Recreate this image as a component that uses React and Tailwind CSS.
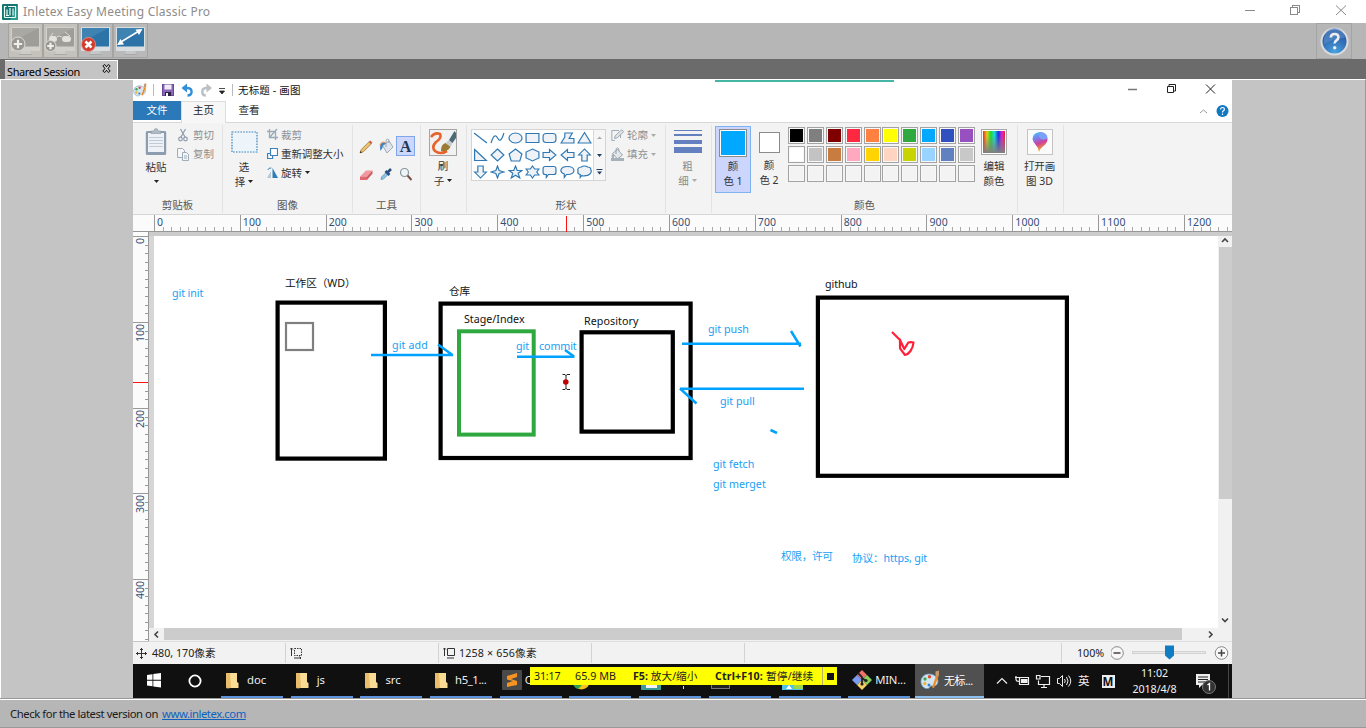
import React from "react";

const B = "#2f78b4";

function Label({ children, className = "" }) {
  return <span className={"block whitespace-nowrap " + className}>{children}</span>;
}

/* ---------- outer window ---------- */

function TitleBar() {
  return (
    <div className="flex h-[23px] items-center bg-white">
      <svg className="ml-[2px] h-4 w-4" viewBox="0 0 16 16">
        <rect width="16" height="16" rx="1" fill="#14756f" />
        <path d="M16 0v16H8z" fill="#2a9c8e" />
        <path d="M2.500 13.500V2.500H4.500M13.500 13.500V2.500H6M2.500 13.500h11M5 5.500v6M8 4v7.500M11 4.500v7M4 11.500h3" stroke="#e8fffb" strokeWidth="1.200" fill="none" />
      </svg>
      <Label className="ml-[5px] grow text-[12px] leading-none tracking-[0.230px] text-[#8c8c8c]">Inletex Easy Meeting Classic Pro</Label>
      <svg className="h-[23px] w-[130px]" viewBox="1236 0 130 23" fill="none" stroke="#8a8a8a" shapeRendering="crispEdges">
        <path d="M1245 10.500h10M1290.500 7.500h7v7h-7zM1292.500 7.500v-2h7v7h-2" />
        <path d="M1336 5.500l10 9.500M1346 5.500l-10 9.500" shapeRendering="auto" />
      </svg>
    </div>
  );
}

function Monitor({ gray, children }) {
  return (
    <div className={"flex h-[35px] w-[35px] items-center justify-center border border-[#a5a39f] " + (gray ? "bg-[#c5c2bb]" : "bg-[#b9b9b9]")}>
      <svg className="h-[33px] w-[33px]" viewBox="0 0 33 33">
        <path d="M11 30l1-4h9l1 4z" fill={gray ? "#cfccc6" : "#c5c8ca"} />
        <rect x="2" y="3" width="29" height="24" rx="1" fill={gray ? "#d2d0ca" : "#d9dee0"} />
        <rect x="3" y="4" width="27" height="18.500" fill={gray ? "#9f9d97" : "#2c74a8"} />
        <path d="M3 4h27L3 18z" fill={gray ? "#aaa8a2" : "#3e83b2"} />
        <rect x="10" y="30" width="13" height="1" fill="#a9a9a7" />
        {children}
      </svg>
    </div>
  );
}

function Plus({ x, y, r }) {
  return (
    <g>
      <circle cx={x} cy={y} r={r} fill="#999791" stroke="#dddbd6" strokeWidth="1" />
      <path d={`M${x - r * 0.6} ${y}h${r * 1.2}M${x} ${y - r * 0.6}v${r * 1.2}`} stroke="#f0efec" strokeWidth="2.2" />
    </g>
  );
}

function Toolbar() {
  return (
    <div className="flex h-[36px] justify-between bg-[#b6b6b6] pl-[8px] pr-[14px]">
      <div className="flex">
        <Monitor gray><Plus x={9} y={20} r={7} /></Monitor>
        <Monitor gray>
          <path d="M9 9L6 13M21 8l5 4" stroke="#dedcd7" fill="none" />
          <rect x="5" y="12" width="8" height="6" rx="3" fill="#e4e2dd" />
          <rect x="18" y="12" width="9" height="6" rx="3" fill="#e4e2dd" />
          <path d="M13 13q2-2 5 0" stroke="#dedcd7" fill="none" />
          <Plus x={6.5} y={22} r={5.5} />
        </Monitor>
        <Monitor>
          <circle cx="9.500" cy="20.500" r="7" fill="#d23a2c" stroke="#e79a92" strokeWidth=".8" />
          <path d="M6.500 17.500l6 6M12.500 17.500l-6 6" stroke="#fff" strokeWidth="2.600" />
        </Monitor>
        <Monitor>
          <path d="M6 18.500L25 7" stroke="#fff" strokeWidth="1.500" />
          <path d="M3 21l3.500-6 3.500 5.500zM28.500 5l-7 0.500 3.500 5.500z" fill="#fff" />
        </Monitor>
      </div>
      <div className="flex h-[36px] w-[36px] items-center justify-center border border-[#a4a4a4]">
        <svg className="h-[29px] w-[29px]" viewBox="0 0 29 29">
          <defs>
            <radialGradient id="hb" cx="50%" cy="95%" r="90%">
              <stop offset="0" stopColor="#4aa3e0" />
              <stop offset="1" stopColor="#244f9c" />
            </radialGradient>
          </defs>
          <circle cx="14.500" cy="14.500" r="14" fill="#d9dcdf" />
          <circle cx="14.500" cy="14.500" r="12" fill="url(#hb)" />
          <path d="M4 12a10.500 10.500 0 0 1 21-1q-9-1-21 6z" fill="#5d8fca" opacity=".6" />
          <path d="M10.800 10.500q0-3.500 3.800-3.500t3.800 3.200q0 1.800-2 3.100t-1.700 3.200" stroke="#eee" strokeWidth="2.600" fill="none" />
          <circle cx="14.700" cy="20.800" r="1.700" fill="#eee" />
        </svg>
      </div>
    </div>
  );
}

function TabStrip() {
  return (
    <div className="flex h-[20px] items-end bg-[#6b6b6b] pl-[5px]">
      <div className="flex h-[19px] w-[113px] items-center justify-between border-r border-t border-white bg-[#c4c4c4] pl-[2px] pr-[6px]">
        <Label className="pt-[2px] text-[11px] leading-none tracking-[-0.380px] text-black">Shared Session</Label>
        <svg className="mb-[3px] h-[9px] w-[9px]" viewBox="0 0 9 9" fill="none">
          <path d="M1.500 1l6 7M7.500 1l-6 7" stroke="#111" strokeWidth="3" />
          <path d="M2 1.500l5 6M7 1.500l-5 6" stroke="#ddd" strokeWidth="1.200" />
        </svg>
      </div>
    </div>
  );
}

/* ---------- paint window chrome ---------- */

function Palette({ className }) {
  return (
    <svg className={className} viewBox="0 0 20 20">
      <path d="M9 4C3 4 .5 9 1 12.500S4 19 8 18.500c2-.3 1.500-2 3-2.500s5 1 6.500-2.500C19.500 9 15 4 9 4z" fill="#d3e6f3" stroke="#6f9fc2" strokeWidth=".8" />
      <circle cx="5" cy="9" r="1.700" fill="#3aa655" />
      <circle cx="9.500" cy="6.800" r="1.700" fill="#e2492f" />
      <circle cx="4.800" cy="13.500" r="1.700" fill="#f2b632" />
      <circle cx="9" cy="15" r="1.500" fill="#3b7fd0" />
      <path d="M16 6l2.500.5L14 18l-2-.5z" fill="#f08a24" />
      <path d="M15.500 1.500l3.500-1-.2 6-3.300-.5z" fill="#c99a6a" />
    </svg>
  );
}

function QuickBar() {
  return (
    <div className="flex h-[22px] items-center bg-white">
      <Palette className="h-[14px] w-[14px]" />
      <svg className="ml-[3px] h-[22px] w-[86px]" viewBox="150 79 86 22" fill="none">
        <path d="M153.500 84v12M232.500 84v12" stroke="#bbb" />
        <rect x="162.500" y="84.500" width="11" height="11" fill="#8a67b5" stroke="#6b4799" />
        <rect x="164.500" y="84.500" width="7" height="5" fill="#f0ecf6" />
        <rect x="165" y="92" width="6" height="4" fill="#2e2344" />
        <rect x="166" y="93" width="2" height="3" fill="#fff" />
        <path d="M183 88h4.500q4.500 0 4 4.500-.5 3-4 3" stroke="#2f8fd8" strokeWidth="2.400" />
        <path d="M187 83.500l-5.500 4.500 5.500 4.500z" fill="#2f8fd8" />
        <path d="M210 88h-4q-4 0-3.700 4.500.4 3 3.500 3" stroke="#b9bfc4" strokeWidth="2.400" />
        <path d="M206.500 83.500l5.500 4.500-5.500 4.500z" fill="#b9bfc4" />
        <path d="M219 88.500h6M219.500 91h5l-2.500 3z" stroke="#222" strokeWidth=".8" fill="#222" />
      </svg>
      <Label className="ml-[2px] grow text-[10.500px] leading-none tracking-[0.150px] text-[#111]">无标题 - 画图</Label>
      <svg className="h-[22px] w-[532px]" viewBox="700 79 532 22" fill="none" stroke="#222">
        <path d="M715 81h179" stroke="#45b5a4" strokeWidth="2" />
        <path d="M1128 89.500h9" stroke="#777" strokeWidth="1.500" />
        <path d="M1167.500 86.500h6v6h-6zM1169 86v-1.500h6.500v6.500h-1.500" />
        <path d="M1206 84.500l9 9M1215 84.500l-9 9" />
      </svg>
    </div>
  );
}

function RibbonTabs() {
  return (
    <div className="flex h-[22px] items-start border-b border-[#d8d8d8] bg-white text-[10.500px] leading-none">
      <div className="flex h-[19px] w-[48px] items-center justify-center bg-[#2b79b9] text-white">文件</div>
      <div className="flex h-[22px] w-[45px] items-center justify-center border-x border-t border-[#dcdcdc] bg-[#f7f7f7] pb-[4px] text-[#222]">主页</div>
      <div className="flex h-[19px] w-[46px] items-center justify-center text-[#333]">查看</div>
      <div className="grow" />
      <svg className="h-[20px] w-[40px]" viewBox="1192 101 40 20" fill="none">
        <path d="M1200 113l3.500-3 3.500 3" stroke="#999" />
        <circle cx="1222.500" cy="111" r="6" fill="#1078c0" />
        <path d="M1220.600 109.500q0-2 1.900-2t1.900 1.700q0 1-1 1.600t-.9 1.700M1222.500 113.500v1.500" stroke="#fff" strokeWidth="1.200" />
      </svg>
    </div>
  );
}

function Group({ className = "", label, children }) {
  return (
    <div className={"flex h-[88px] shrink-0 flex-col justify-between border-r border-[#e2e3e4] pb-px " + className}>
      <div className="flex">{children}</div>
      <div className="flex h-[14px] justify-center text-[10.500px] leading-[14px] text-[#555]">{label}</div>
    </div>
  );
}

function Caret({ className = "", color = "#222" }) {
  return (
    <svg className={"h-[3px] w-[5px] " + className} viewBox="0 0 5 3">
      <path d="M0 0h5L2.500 3z" fill={color} />
    </svg>
  );
}

function Clipboard() {
  return (
    <Group className="w-[90px]" label="剪贴板">
      <div className="flex w-[46px] flex-col items-center pt-[3px] text-[10.500px] leading-none text-[#333]">
        <svg className="h-[28px] w-[22px]" viewBox="0 0 22 28">
          <rect x=".8" y="3" width="20.400" height="24" rx="1.500" fill="#8c9db0" />
          <rect x="3" y="5" width="16" height="19" fill="#eef2f6" />
          <path d="M4 9.500h14M4 12.500h14M4 15.500h14M4 18.500h14" stroke="#c3ccd6" />
          <path d="M6 5.500V3h3q0-2.500 2-2.500T13 3h3v2.500z" fill="#b2bcc6" stroke="#8593a1" strokeWidth=".6" />
        </svg>
        <Label className="mt-[6px]">粘贴</Label>
        <Caret className="mt-[7px]" />
      </div>
      <div className="-ml-[2px] flex flex-col gap-[5px] pt-[3px] text-[10.500px] leading-[14px] text-[#8e8e8e]">
        <div className="flex gap-[4px]">
          <svg className="h-[14px] w-[12px]" viewBox="0 0 12 14" fill="none" stroke="#8d9cab" strokeWidth="1.200">
            <path d="M3.500 1l4.500 8M8.500 1L4 9" />
            <circle cx="3.500" cy="11" r="1.800" />
            <circle cx="8.500" cy="11" r="1.800" />
          </svg>
          <Label>剪切</Label>
        </div>
        <div className="flex gap-[4px]">
          <svg className="h-[14px] w-[12px]" viewBox="0 0 12 14" fill="#f4f6f8" stroke="#9fadbb">
            <path d="M.5 1.500h5l2 2v7h-7z" />
            <path d="M5.500 5.500h4l2 2v6h-6zM7 9h3M7 11h3" />
          </svg>
          <Label>复制</Label>
        </div>
      </div>
    </Group>
  );
}

function ImageGroup() {
  return (
    <Group className="w-[130px]" label="图像">
      <div className="flex w-[42px] flex-col items-center pt-[6px] text-[10.500px] leading-none text-[#333]">
        <svg className="h-[22px] w-[27px]" viewBox="0 0 27 22">
          <rect x="1" y="1" width="25" height="20" fill="#eef5fa" stroke="#3584bf" strokeWidth="1.200" strokeDasharray="1.600 1.200" />
        </svg>
        <Label className="mt-[9px]">选</Label>
        <div className="mt-[4px] flex items-center gap-[3px]"><span>择</span><Caret /></div>
      </div>
      <div className="flex flex-col gap-[5px] pl-[2px] pt-[3px] text-[10.500px] leading-[14px] text-[#333]">
        <div className="flex gap-[3px] text-[#909090]">
          <svg className="h-[13px] w-[11px]" viewBox="0 0 11 13" fill="none" stroke="#9aa9b6" strokeWidth="1.300">
            <path d="M2.500 1v8.500H11M0 3.500h8.500V12M10 1L3 9" />
          </svg>
          <Label>裁剪</Label>
        </div>
        <div className="flex gap-[3px]">
          <svg className="h-[13px] w-[11px]" viewBox="0 0 11 13" fill="#fff" stroke="#3a82b8" strokeWidth="1.200">
            <path d="M.6 6.500h5v5h-5z" />
            <path d="M3.500 1.500h7v7h-7z" />
          </svg>
          <Label className="tracking-[-0.100px]">重新调整大小</Label>
        </div>
        <div className="flex gap-[3px]">
          <svg className="h-[13px] w-[11px]" viewBox="0 0 11 13">
            <path d="M0 12l4-7v7z" fill="#b9c6d0" />
            <path d="M5.500 2v10H11z" fill="#2f7db5" />
            <path d="M.8 4q1-2.500 3.500-2" stroke="#2f7db5" fill="none" />
          </svg>
          <Label>旋转</Label>
          <Caret className="mt-[5px]" />
        </div>
      </div>
    </Group>
  );
}

function ToolsGroup() {
  return (
    <Group className="w-[68px]" label="工具">
      <div className="grid grid-cols-[20px_20px_20px] gap-y-[8px] pl-[3px] pt-[11px]">
        <svg className="h-[20px] w-[20px]" viewBox="0 0 20 20">
          <path d="M4 17l1.200-3.500L13 5.800l2.200 2.200L7.500 15.700z" fill="#e9c06f" stroke="#9b7135" strokeWidth=".7" />
          <path d="M13 5.800l1.200-1.200 2.200 2.200-1.200 1.200z" fill="#c5573d" />
          <path d="M4 17l.6-2 1.400 1.400z" fill="#222" />
        </svg>
        <svg className="h-[20px] w-[20px]" viewBox="0 0 20 20">
          <path d="M6.500 9.500l6.500-4.500 4 6-6 6z" fill="#dfe7ee" stroke="#8b97a2" strokeWidth=".8" />
          <path d="M10 11V5.500Q10 3 11.500 3t1.500 2v2" fill="none" stroke="#8b97a2" strokeWidth=".8" />
          <path d="M9 7Q4 6 4 12l.5 3Q7 12 7 9.500l3-2z" fill="#3d85c6" />
          <path d="M9 6.500Q5 5 4 9.500" stroke="#d8863f" fill="none" />
        </svg>
        <div className="flex h-[20px] w-[19px] items-center justify-center border border-[#7ea6e8] bg-[#ccd7fb] pt-px font-['Liberation_Serif',serif] text-[16px] font-bold leading-none text-[#1f3757]">A</div>
        <svg className="h-[20px] w-[20px]" viewBox="0 0 20 20">
          <path d="M4 12.500l6-6h6.500l-5.500 6z" fill="#f09aa0" />
          <path d="M4 12.500h7v3.500H4z" fill="#e0696f" />
          <path d="M11 12.500l5.500-6v3L11 16z" fill="#cd5960" />
        </svg>
        <svg className="h-[20px] w-[20px]" viewBox="0 0 20 20">
          <path d="M5 15.500l.5-2.500 5-5 2 2-5 5z" fill="#8cc3e6" stroke="#5a8bb0" strokeWidth=".7" />
          <path d="M9.500 7l4 4M11.500 8.500l3.500-3.500" stroke="#284f80" strokeWidth="2.600" />
        </svg>
        <svg className="h-[20px] w-[20px]" viewBox="0 0 20 20">
          <circle cx="8.500" cy="8.500" r="4" fill="#eef5f8" stroke="#87939b" strokeWidth="1.200" />
          <path d="M11.500 11.500l4 4.500" stroke="#7a5044" strokeWidth="2" />
        </svg>
      </div>
    </Group>
  );
}

function BrushGroup() {
  return (
    <Group className="w-[46px]">
      <div className="flex w-[44px] flex-col items-center pt-[4px] text-[10.500px] leading-none text-[#333]">
        <svg className="h-[27px] w-[28px]" viewBox="0 0 28 27">
          <rect x=".5" y=".5" width="27" height="26" fill="#f1f1f1" stroke="#a5a5a5" />
          <path d="M2 8Q6 3 11 5q2 4-4 8-5 5-1 9 5 4 12 0" fill="none" stroke="#e8622c" strokeWidth="2.600" />
          <path d="M12 22q0-7 4.500-8l5 3q-1 6-9.500 5z" fill="#9c7b35" />
          <path d="M16.500 14l3.500-3 3.500 3-2 4z" fill="#c9cdd0" />
          <path d="M20 11l5.500-9L27 4v5l-3.500 5z" fill="#4d6878" />
        </svg>
        <Label className="mt-[5px]">刷</Label>
        <div className="mt-[4px] flex items-center gap-[3px]"><span>子</span><Caret /></div>
      </div>
    </Group>
  );
}

const SHAPES = [
  "M1 2l12 10", "M1 12Q4 1 7 7T13 2", "M7 2a6 5 0 1 0 .01 0z", "M1 2.500h12v9H1z",
  "M4 2.500h6q3 0 3 3v3q0 3-3 3H4q-3 0-3-3v-3q0-3 3-3z", "M1 12l3.500-6V2h7l-3 5.500h4.500V12z", "M7 1.500l6 10.500H1z",
  "M1.500 1.500l11 11h-11z", "M7 1l6 6-6 6-6-6z", "M7 1l6 5-2 7H3L1 6z", "M7 1l6 3v6l-6 3-6-3V4z",
  "M1 4.500h6V1.500L13 7l-6 5.500v-3H1z", "M13 4.500H7V1.500L1 7l6 5.500v-3h6z", "M4.500 13V7H1.500L7 1l5.500 6h-3v6z",
  "M4.500 1v6H1.500L7 13l5.500-6h-3V1z", "M7 1l1.500 4.500L13 7 8.500 8.500 7 13 5.500 8.500 1 7l4.500-1.500z",
  "M7 1l1.600 4.500H13L9.500 8.300 11 13 7 10.200 3 13l1.500-4.700L1 5.500h4.400z",
  "M7 1l2 3h4l-2 3 2 3H9l-2 3-2-3H1l2-3-2-3h4z",
  "M3 1.500h8q2 0 2 2v4q0 2-2 2H6l-2 3v-3H3q-2 0-2-2v-4q0-2 2-2z",
  "M7 1.500c8 0 8 8 0 8h-1l-2 3v-3.500c-5-2-4-7.500 3-7.500z",
  "M4 2q3-2 6 0 3 0 3 3 1 2-1 4-2 2-4 1.500-2 1-3.500 0l-1.500 2v-3Q0 8.500 1 6 0 2.500 4 2z",
];

function ShapesGroup() {
  return (
    <Group className="w-[199px]" label="形状">
      <div className="ml-[4px] mt-[4px] flex h-[52px] w-[135px] border border-[#d4d4d4] bg-white">
        <div className="grid w-[121px] grid-cols-7 content-start gap-y-[3px] pt-px">
          {SHAPES.map((d, i) => (
            <svg key={i} className="mx-auto h-[14px] w-[15px]" viewBox="0 0 14 14" preserveAspectRatio="none" fill={i < 2 ? "none" : "#eff3f7"} stroke={B} strokeWidth="1.100">
              <path d={d} />
            </svg>
          ))}
        </div>
        <div className="flex w-[12px] flex-col items-center border-l border-[#d9d9d9] bg-[#f6f6f6]">
          <svg className="h-[50px] w-[11px]" viewBox="0 0 11 50">
            <path d="M3 9h5L5.500 6.500z" fill="#aaa" />
            <path d="M3 24h5l-2.500 3zM3 41.500h5l-2.500 3zM2.500 39h6v1h-6z" fill="#1f3f63" />
          </svg>
        </div>
      </div>
      <div className="flex flex-col gap-[5px] pl-[5px] pt-[3px] text-[10.500px] leading-[14px] text-[#909090]">
        <div className="flex items-center gap-[3px]">
          <svg className="h-[14px] w-[13px]" viewBox="0 0 13 14" fill="none" stroke="#9fabb5">
            <path d="M8 2.500H.8v10h3M9.500 6v4" />
            <path d="M3.500 10.500l.7-2.700 6.500-6 2 2-6.500 6z" fill="#dfe4e8" />
          </svg>
          <Label>轮廓</Label>
          <Caret color="#aaa" />
        </div>
        <div className="flex items-center gap-[3px]">
          <svg className="h-[14px] w-[13px]" viewBox="0 0 13 14">
            <path d="M1.500 6.500l5-4 5 5.500-5 4z" fill="#e3e7ea" stroke="#98a5b0" />
            <path d="M5 7V3q0-2 1.500-2T8 4" fill="none" stroke="#98a5b0" />
            <path d="M0 11h13v3H0zM1 7q-1 2 0 4h2V8z" fill="#a5b2bc" />
          </svg>
          <Label>填充</Label>
          <Caret color="#aaa" />
        </div>
      </div>
    </Group>
  );
}

function SizeGroup() {
  return (
    <Group className="w-[46px]">
      <div className="flex w-[43px] flex-col items-center pt-[4px] text-[10.500px] leading-none text-[#8a8a8a]">
        <svg className="h-[25px] w-[28px]" viewBox="0 0 28 25" fill="#6580c0">
          <path d="M0 1h28v1H0zM0 5h28v2H0zM0 11h28v4H0zM0 18h28v6H0z" />
        </svg>
        <Label className="mt-[7px]">粗</Label>
        <div className="mt-[4px] flex items-center gap-[3px]"><span>细</span><Caret color="#aaa" /></div>
      </div>
    </Group>
  );
}

const SWATCHES = [
  "bg-[#000000]", "bg-[#7f7f7f]", "bg-[#800000]", "bg-[#ff2840]", "bg-[#ff8040]", "bg-[#ffff00]", "bg-[#30a840]", "bg-[#00a8ff]", "bg-[#3050c0]", "bg-[#9850c0]",
  "bg-[#ffffff]", "bg-[#c3c3c3]", "bg-[#c87c40]", "bg-[#ffa8c0]", "bg-[#ffd400]", "bg-[#ffd4c0]", "bg-[#c8d400]", "bg-[#98d4ff]", "bg-[#6080c0]", "bg-[#c8c8c8]",
  ...Array(10).fill("bg-[#f3f3f3]"),
];

function ColorsGroup() {
  return (
    <Group className="w-[306px]" label="颜色">
      <div className="ml-[3px] mt-px flex h-[67px] w-[36px] flex-col items-center border border-[#7fb2f0] bg-[#ccd5fc] pt-[2px] text-[10.500px] leading-none text-[#333]">
        <div className="h-[28px] w-[28px] border border-[#8b8b8b] bg-white p-px"><div className="h-full w-full bg-[#00a8ff]" /></div>
        <Label className="mt-[4px]">颜</Label>
        <Label className="mt-[4px]">色 1</Label>
      </div>
      <div className="flex w-[36px] flex-col items-center pt-[7px] text-[10.500px] leading-none text-[#333]">
        <div className="h-[21px] w-[21px] border border-[#8b8b8b] bg-white" />
        <Label className="mt-[7px]">颜</Label>
        <Label className="mt-[4px]">色 2</Label>
      </div>
      <div className="ml-px mt-[2px] grid w-[189px] grid-cols-10 content-start gap-y-[2px]">
        {SWATCHES.map((c, i) => (
          <div key={i} className="h-[17px] w-[17px] border border-[#a3a3a3] bg-[#f8f8f8] p-px">
            <div className={"h-full w-full " + c} />
          </div>
        ))}
      </div>
      <div className="flex w-[34px] flex-col items-center pt-[4px] text-[10.500px] leading-none text-[#333]">
        <div className="h-[26px] w-[26px] border border-[#a8a8a8] bg-white p-px">
          <div className="h-full w-full bg-[linear-gradient(to_bottom,transparent_20%,#808080),linear-gradient(to_right,#ff2020,#d8d020_18%,#20d830_35%,#20d8d8_52%,#2030e0_70%,#e020d0_86%,#f02020)]" />
        </div>
        <Label className="mt-[6px]">编辑</Label>
        <Label className="mt-[4px]">颜色</Label>
      </div>
    </Group>
  );
}

function Paint3D() {
  return (
    <Group className="w-[46px]">
      <div className="flex w-[43px] flex-col items-center pt-[4px] text-[10.500px] leading-none text-[#333]">
        <svg className="h-[26px] w-[26px]" viewBox="0 0 26 26">
          <defs>
            <linearGradient id="p3" x1="0" y1="0" x2="0.300" y2="1">
              <stop offset="0" stopColor="#35d3f5" />
              <stop offset=".35" stopColor="#7c7ff0" />
              <stop offset=".65" stopColor="#d0409a" />
              <stop offset="1" stopColor="#f5b020" />
            </linearGradient>
          </defs>
          <rect x=".5" y=".5" width="25" height="25" fill="#fbfbfb" stroke="#c4c4c4" />
          <path d="M13 3q7 .5 7.500 7 0 4-4 7t-4.500 6q-1-5-3.500-7.500T5.500 10q.5-6.500 7.500-7z" fill="url(#p3)" />
          <path d="M13 3q7 .5 7.500 6-3 3-6.500 1t-1-7z" fill="#7aa0f8" />
        </svg>
        <Label className="mt-[6px] tracking-[-0.200px]">打开画</Label>
        <Label className="mt-[4px]">图 3D</Label>
      </div>
    </Group>
  );
}

function Ribbon() {
  return (
    <div className="flex h-[92px] items-start border-b border-[#d6d6d6] bg-[#f3f3f3] pt-[2px]">
      <Clipboard />
      <ImageGroup />
      <ToolsGroup />
      <BrushGroup />
      <ShapesGroup />
      <SizeGroup />
      <ColorsGroup />
      <Paint3D />
    </div>
  );
}

/* ---------- rulers and canvas ---------- */

const TICKS = Array.from({ length: 9 }, (_, i) => (i + 1) * 8.58);

function RulerTop() {
  return (
    <div className="relative flex h-[17px] border-b border-[#979797] bg-[#fbfbfb] pl-[21px]">
      <div className="flex w-[1078px] overflow-hidden">
        {Array.from({ length: 13 }, (_, k) => (
          <div key={k} className="relative h-[16px] w-[85.830px] shrink-0 border-l border-[#999] pl-[2px]">
            <Label className="text-[10.500px] leading-[15px] tracking-[0.100px] text-[#335078]">{k * 100}</Label>
            <svg className="absolute bottom-0 left-0 h-[4px] w-[85px]" viewBox="0 0 85 4">
              {TICKS.map((x) => <path key={x} d={`M${Math.round(x) - 0.5} 0v4`} stroke="#aaa" />)}
            </svg>
          </div>
        ))}
      </div>
      <div className="absolute left-[433px] top-px h-[16px] w-px bg-[#ff1010]" />
    </div>
  );
}

function RulerLeft() {
  return (
    <div className="relative h-[409px] w-[16px] overflow-hidden border-r border-[#979797] bg-[#fbfbfb] pt-[4px]">
      {Array.from({ length: 5 }, (_, k) => (
        <div key={k} className="relative h-[85.830px] border-t border-[#999] pl-[1px] pt-[1px]">
          <span className="block w-[13px] rotate-180 whitespace-nowrap text-[10.500px] leading-[12px] text-[#335078] [writing-mode:vertical-rl]">{k * 100}</span>
          <svg className="absolute right-0 top-0 h-[85px] w-[3px]" viewBox="0 0 3 85">
            {TICKS.map((y) => <path key={y} d={`M0 ${Math.round(y) - 0.5}h3`} stroke="#999" />)}
          </svg>
        </div>
      ))}
      <div className="absolute left-0 top-[150px] z-10 h-px w-[16px] bg-[#ff1010]" />
    </div>
  );
}

function Note({ className, children }) {
  return <span className={"absolute whitespace-nowrap text-[10.700px] leading-[14px] " + className}>{children}</span>;
}

function Canvas() {
  return (
    <div className="relative h-[392px] w-[1064px] bg-white">
      <svg className="absolute inset-0 h-full w-full" viewBox="154 236 1064 392" fill="none">
        <g stroke="#000" strokeWidth="4.200">
          <rect x="277.600" y="302.600" width="107.300" height="156" />
          <rect x="440.600" y="303.600" width="250" height="154.400" />
          <rect x="581.600" y="332.300" width="91.200" height="99.300" />
          <rect x="817.900" y="297.600" width="249" height="178.200" />
        </g>
        <rect x="459" y="331.300" width="74.700" height="103.300" stroke="#30a840" strokeWidth="4" />
        <rect x="286" y="323" width="27" height="27" stroke="#7f7f7f" strokeWidth="2.200" />
        <g stroke="#00a2ff" strokeWidth="2.500">
          <path d="M371 355H453M438 344.500L452.500 355" />
          <path d="M517 356.700H574.500M565 350L574 356.500" />
          <path d="M682 343.800H801M791 331L800.500 346.500" />
          <path d="M804 388.800H680M680 388.500L696.500 403.500" />
          <path d="M770.500 430L777 433" />
        </g>
        <path d="M892 332l8 8 4.300 9 4-6.500q3-.8 5.200 0-.5 5-3 8.500-2.500 3.500-5.500 4l-5-6.700v-9.500" stroke="#ff2038" strokeWidth="2.200" strokeLinejoin="round" />
        <path d="M562.500 374.500h2.500l1 1 1-1h3M562.500 389.500h2.500l1-1 1 1h3M566 375v14" stroke="#222" />
        <circle cx="565.800" cy="382" r="2.800" fill="#c00000" />
      </svg>
      <Note className="left-[18px] top-[50px] tracking-[-0.100px] text-[#18a0f5]">git init</Note>
      <Note className="left-[131px] top-[40px] tracking-[-0.100px] text-[#111]">工作区（WD）</Note>
      <Note className="left-[295px] top-[48px] tracking-[-0.200px] text-[#111]">仓库</Note>
      <Note className="left-[310px] top-[76px] text-[#111]">Stage/Index</Note>
      <Note className="left-[430px] top-[78px] tracking-[0.080px] text-[#111]">Repository</Note>
      <Note className="left-[671px] top-[41px] tracking-[-0.100px] text-[#111]">github</Note>
      <Note className="left-[238px] top-[102px] tracking-[0.120px] text-[#18a0f5]">git add</Note>
      <Note className="left-[362px] top-[103px] text-[#18a0f5]">git</Note>
      <Note className="left-[385px] top-[103px] tracking-[-0.100px] text-[#18a0f5]">commit</Note>
      <Note className="left-[554px] top-[86px] text-[#18a0f5]">git push</Note>
      <Note className="left-[566px] top-[158px] text-[#18a0f5]">git pull</Note>
      <Note className="left-[559px] top-[221px] text-[#18a0f5]">git fetch</Note>
      <Note className="left-[559px] top-[241px] text-[#18a0f5]">git merget</Note>
      <Note className="left-[627px] top-[313px] tracking-[-0.350px] text-[#18a0f5]">权限，许可</Note>
      <Note className="left-[698px] top-[315px] tracking-[-0.150px] text-[#18a0f5]">协议：https, git</Note>
    </div>
  );
}

function Workspace() {
  return (
    <div className="flex h-[410px]">
      <RulerLeft />
      <div className="flex h-[410px] w-[1083px] flex-col bg-[#cbcbcb] pt-[4px]">
        <div className="flex h-[392px]">
          <div className="w-[5px] shrink-0 bg-[#d6d6d6]" />
          <Canvas />
          <div className="flex w-[14px] flex-col items-center bg-[#f1f1f1]">
            <svg className="h-[11px] w-[14px] shrink-0" viewBox="0 0 14 11" fill="none"><path d="M4 6l3-3 3 3" stroke="#444" strokeWidth="1.600" /></svg>
            <div className="h-[252px] w-[13px] shrink-0 bg-[#cccccc]" />
            <div className="grow" />
            <svg className="h-[16px] w-[14px]" viewBox="0 0 14 16" fill="none"><path d="M4 6.500l3 3 3-3" stroke="#444" strokeWidth="1.600" /></svg>
          </div>
        </div>
        <div className="flex h-[13px] bg-[#f1f1f1]">
          <svg className="h-[13px] w-[15px]" viewBox="0 0 15 13" fill="none"><path d="M9 3.500L6 6.500l3 3" stroke="#444" strokeWidth="1.600" /></svg>
          <div className="h-[12px] w-[1018px] bg-[#cccccc]" />
          <svg className="ml-[21px] h-[13px] w-[15px]" viewBox="0 0 15 13" fill="none"><path d="M6 3.500l3 3-3 3" stroke="#444" strokeWidth="1.600" /></svg>
        </div>
        <div className="h-px bg-[#dedede]" />
      </div>
    </div>
  );
}

function StatusBar() {
  return (
    <div className="flex h-[22px] items-center bg-[#f2f2f2] text-[10.700px] leading-none text-[#222]">
      <div className="flex h-[20px] w-[153px] items-center border-r border-[#d3d3d3]">
        <svg className="ml-[3px] h-[11px] w-[11px]" viewBox="0 0 11 11" fill="none" stroke="#333"><path d="M5.500 0v11M0 5.500h11M4 2l1.500-1.500L7 2M4 9l1.500 1.500L7 9M2 4L.5 5.500 2 7M9 4l1.500 1.500L9 7" /></svg>
        <Label className="ml-[5px]">480, 170像素</Label>
      </div>
      <div className="flex h-[20px] w-[153px] items-center border-r border-[#d3d3d3]">
        <svg className="ml-[4px] h-[12px] w-[12px]" viewBox="0 0 12 12" fill="none" stroke="#333"><path d="M1.500 1v8M0 2.500L1.500 1 3 2.500M4 11h7M9.500 9.500L11 11l-1.500 1.500" /><path d="M4.500 1.500h7v7h-7z" strokeDasharray="1.500 1" /></svg>
      </div>
      <div className="flex h-[20px] w-[153px] items-center border-r border-[#d3d3d3]">
        <svg className="ml-[4px] h-[12px] w-[12px]" viewBox="0 0 12 12" fill="none" stroke="#333"><path d="M1.500 1v8M0 2.500L1.500 1 3 2.500M4 11h7M4.500 1.500h7v7h-7z" /></svg>
        <Label className="ml-[4px] tracking-[0.160px]">1258 × 656像素</Label>
      </div>
      <div className="h-[20px] w-[153px] border-r border-[#d3d3d3]" />
      <div className="h-[20px] w-[317px] border-r border-[#d3d3d3]" />
      <Label className="ml-[15px] w-[34px]">100%</Label>
      <svg className="h-[20px] w-[119px]" viewBox="1111 643 119 20" fill="none">
        <circle cx="1117" cy="653" r="6.300" fill="#f8f8f8" stroke="#8a8a8a" />
        <path d="M1113.500 653h7" stroke="#444" strokeWidth="1.500" />
        <rect x="1132.500" y="651.500" width="73" height="2" fill="#e8e8e8" stroke="#d2d2d2" />
        <path d="M1165 645.500h9v10l-4.500 4-4.500-4z" fill="#0f7cc4" />
        <circle cx="1221.500" cy="653" r="6.300" fill="#f8f8f8" stroke="#8a8a8a" />
        <path d="M1218 653h7M1221.500 649.500v7" stroke="#444" strokeWidth="1.500" />
      </svg>
    </div>
  );
}

/* ---------- taskbar ---------- */

function Folder() {
  return (
    <svg className="ml-[5px] h-[17px] w-[13px]" viewBox="0 0 13 17">
      <path d="M0 1h8v15H1z" fill="#f7d48a" />
      <path d="M4 1h7v9l1.500 1v5H4z" fill="#fbdc95" />
      <path d="M0 1h4l1 15-4 .5-1-1z" fill="#e9bd6a" />
    </svg>
  );
}

function Task({ icon, label, labelClass = "" }) {
  return (
    <div className="flex h-[34px] w-[69.700px] shrink-0 flex-col justify-between">
      <div className="flex h-[32px] w-[62px] items-center text-[11.300px] leading-none text-[#eee]">
        {icon}
        <Label className={labelClass}>{label}</Label>
      </div>
      <div className="h-[2px] w-[62px] bg-[#5c93dc]" />
    </div>
  );
}

function Taskbar() {
  return (
    <div className="relative flex h-[34px] bg-[#101010]">
      <svg className="ml-[14px] mt-[9px] h-[15px] w-[14px]" viewBox="0 0 14 15" fill="#fff">
        <path d="M0 2l5.500-.8v5.600H0zM6.300 1L14 0v6.800H6.300zM0 7.800h5.500v5.500L0 12.500zM6.300 7.800H14V14.500l-7.700-1z" />
      </svg>
      <svg className="ml-[27px] mt-[10px] h-[14px] w-[14px]" viewBox="0 0 14 14"><circle cx="7" cy="7" r="5.600" fill="none" stroke="#fff" strokeWidth="1.800" /></svg>
      <div className="ml-[19px] flex w-[694px]">
        <Task icon={<Folder />} label="doc" labelClass="ml-[8px]" />
        <Task icon={<Folder />} label="js" labelClass="ml-[8px]" />
        <Task icon={<Folder />} label="src" labelClass="ml-[7px]" />
        <Task icon={<Folder />} label="h5_1..." labelClass="ml-[7px] tracking-[-0.400px]" />
        <Task
          icon={<svg className="ml-[2px] h-[20px] w-[20px]" viewBox="0 0 20 20"><rect width="20" height="20" rx="1" fill="#494949" /><path d="M5 6l10-3v4l-6 2 6 2v4L5 17v-4l6-2-6-1.500z" fill="#f79320" /></svg>}
          label="C"
          labelClass="ml-[3px]"
        />
        <Task icon={<svg className="ml-[4px] mt-px h-[18px] w-[17px]" viewBox="0 0 17 18"><circle cx="8.500" cy="9" r="8.500" fill="#f3c11f" /><path d="M8.500 .5A8.500 8.500 0 0 0 5 17l5-5z" fill="#2aa24b" /></svg>} />
        <Task icon={
          <svg className="ml-[2px] h-[22px] w-[46px]" viewBox="0 0 46 22">
            <rect width="20" height="21" fill="#3d9c96" /><rect x="5" y="13" width="11" height="6" fill="#f3f3f3" />
            <path d="M42.500 17v3" stroke="#ddd" />
          </svg>
        } />
        <Task icon={<svg className="ml-[2px] h-[18px] w-[19px]" viewBox="0 0 19 18"><rect x=".5" y=".5" width="18" height="17" fill="#222" stroke="#777" /></svg>} />
        <Task icon={<svg className="ml-[3px] h-[22px] w-[21px]" viewBox="0 0 21 22"><rect width="21" height="21" fill="#4fc1e9" /><rect x="12" y="10" width="9" height="10" fill="#9ed64b" /><path d="M4 20l3-4 3 4z" fill="#fff" /></svg>} />
        <Task
          icon={<svg className="ml-[4px] h-[20px] w-[20px]" viewBox="0 0 20 20"><path d="M10 0l5 5-5 5-5-5z" fill="#f0706c" /><path d="M15 5l5 5-5 5-5-5z" fill="#86d15b" /><path d="M5 5l5 5-5 5-5-5z" fill="#7b9cf2" /><path d="M10 10l5 5-5 5-5-5z" fill="#f6cf66" /><path d="M6 3l4 4v7M10 8l4 3" stroke="#222" strokeWidth="1.800" fill="none" /><circle cx="10" cy="14" r="1.600" fill="#222" /><circle cx="14" cy="10.500" r="1.600" fill="#222" /></svg>}
          label="MIN..."
          labelClass="ml-[3px] tracking-[-0.200px]"
        />
      </div>
      <div className="flex w-[69px] flex-col justify-between bg-[#505050] pt-0">
        <div className="flex h-[32px] items-center text-[11px] leading-none text-white">
          <Palette className="ml-[5px] h-[20px] w-[20px]" />
          <Label className="ml-[4px] tracking-[-0.400px]">无标...</Label>
        </div>
        <div className="h-[2px] bg-[#8cc0f0]" />
      </div>
      <svg className="ml-[12px] h-[34px] w-[76px]" viewBox="996 664 76 34" fill="none" stroke="#eee" strokeWidth="1.200">
        <path d="M997 683.500l5-5 5 5" />
        <path d="M1019.500 677.500h9v7h-9zM1016 676v3.500q0 2 3.500 2M1015 677.500h4" />
        <path d="M1021.500 679.500h5.500v3h-5.500z" fill="#eee" />
        <path d="M1041 676.500h8.500v8h-11v-4M1044 684.500v3M1041 687.500h6M1036.500 675.500h3.500v3.500h-3.500z" />
        <path d="M1057.500 678.500h2l3-3v11l-3-3h-2zM1064.500 679q1.500 2 0 4M1066.500 677q3 4 0 8M1068.500 675.500q4.500 5.500 0 11" strokeWidth="1" />
      </svg>
      <Label className="ml-[6px] text-[11.500px] leading-[34px] text-[#eee]">英</Label>
      <div className="ml-[12px] mt-[11px] flex h-[13px] w-[13px] items-center justify-center bg-[#eee] text-[11.500px] font-bold leading-none text-[#111]">M</div>
      <div className="ml-[16px] flex w-[48px] flex-col items-center pt-px text-[10.700px] leading-[16px] tracking-[-0.050px] text-[#f2f2f2]">
        <Label>11:02</Label>
        <Label>2018/4/8</Label>
      </div>
      <svg className="ml-[16px] h-[34px] w-[24px]" viewBox="1196 664 24 34">
        <path d="M1197 674h14v11h-8l-3 3v-3h-3z" fill="#eee" />
        <path d="M1199 677h10M1199 679.500h10M1199 682h8" stroke="#222" />
        <circle cx="1210" cy="687" r="6.500" fill="#333" stroke="#777" />
        <path d="M1208.500 685l2-1.500v7" stroke="#fff" strokeWidth="1.300" fill="none" />
      </svg>
      <div className="grow" />
      <div className="mr-[3px] w-px bg-[#444]" />
      <div className="absolute left-[397px] top-[3px] flex h-[18px] w-[307px] items-center bg-[#ffff00] text-[10.700px] leading-none text-[#222]">
        <Label className="ml-[4px] w-[41px] tracking-[-0.200px]">31:17</Label>
        <Label className="w-[58px] tracking-[0.050px]">65.9 MB</Label>
        <Label className="w-[82px]"><b>F5:</b> 放大/缩小</Label>
        <Label className="tracking-[0.150px]"><b>Ctrl+F10:</b> 暂停/继续</Label>
        <div className="grow" />
        <div className="flex h-[18px] w-[15px] items-center justify-center border-l border-[#b5b56a]"><div className="h-[7px] w-[7px] bg-[#111]" /></div>
      </div>
    </div>
  );
}

export default function App() {
  return (
    <div className="flex h-[728px] w-[1366px] flex-col overflow-hidden bg-[#c4c4c4] font-['Noto_Sans','Noto_Sans_CJK_SC',sans-serif]">
      <TitleBar />
      <Toolbar />
      <TabStrip />
      <div className="flex h-[619px]">
        <div className="w-[133px] border-l border-t border-white bg-[#c4c4c4]" />
        <div className="flex w-[1099px] flex-col overflow-hidden">
          <QuickBar />
          <RibbonTabs />
          <Ribbon />
          <RulerTop />
          <Workspace />
          <StatusBar />
          <Taskbar />
        </div>
        <div className="grow border-r border-t border-r-[#999] border-t-white bg-[#c4c4c4]" />
      </div>
      <div className="h-[30px] border-b border-t border-b-[#999] border-t-[#999] bg-[#b6b6b6]">
        <div className="flex h-[28px] items-center border-t border-white pl-[10px] text-[11.300px] leading-none tracking-[-0.430px] text-[#1a1a1a]">
          <Label>Check for the latest version on</Label>
          <Label className="ml-[4px] tracking-[-0.450px] text-[#0d62c0] underline">www.inletex.com</Label>
        </div>
      </div>
    </div>
  );
}
